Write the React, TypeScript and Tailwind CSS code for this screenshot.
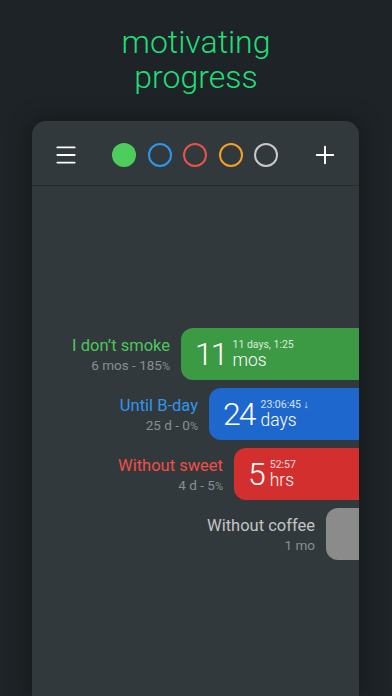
import { Menu, Plus } from "lucide-react";

const rows = [
  { label: "I don\u2019t smoke", sub: "6 mos - 185", pct: true, labelColor: "text-[#4cc85a]", pill: "bg-[#3d9a44]", width: "w-[178px]", big: "11", small: "11 days, 1:25", unit: "mos" },
  { label: "Until B-day", sub: "25 d - 0", pct: true, labelColor: "text-[#2f96ef]", pill: "bg-[#1e67cc]", width: "w-[150px]", big: "24", small: "23:06:45 \u2193", unit: "days" },
  { label: "Without sweet", sub: "4 d - 5", pct: true, labelColor: "text-[#ef4f4a]", pill: "bg-[#d42f2f]", width: "w-[125px]", big: "5", small: "52:57", unit: "hrs" },
  { label: "Without coffee", sub: "1 mo", pct: false, labelColor: "text-[#c4c4c4]", pill: "bg-[#8b8b8b]", width: "w-[33px]", big: "", small: "", unit: "" },
];

const rings = ["border-[#2f96ef]", "border-[#e5524f]", "border-[#f2a222]", "border-[#c9c9c9]"];

export default function App() {
  return (
    <div className="flex h-[696px] w-[392px] flex-col overflow-hidden bg-[#1d2326] font-['Roboto',sans-serif]">
      <h1 className="pt-[25px] text-center text-[32px] font-light leading-[35px] text-[#22dd78]">
        motivating
        <br />
        progress
      </h1>

      <div className="ml-[32px] mt-[26px] flex w-[327px] flex-1 flex-col overflow-hidden rounded-t-[14px] bg-[#32393c] shadow-[0_0_24px_rgba(0,0,0,0.35)]">
        <div className="flex h-[65px] items-center border-b border-[#252b2d] pl-[21px] pr-[20px] pt-[3px]">
          <Menu className="h-[26px] w-[26px] text-white" strokeWidth={1.7} />
          <div className="ml-[33px] flex items-center gap-[11.5px]">
            <span className="h-[24px] w-[24px] rounded-full bg-[#4dce5c]" />
            {rings.map((r) => (
              <span key={r} className={`h-[24px] w-[24px] rounded-full border-2 ${r}`} />
            ))}
          </div>
          <Plus className="ml-auto h-[28px] w-[28px] text-white" strokeWidth={1.7} />
        </div>

        <div className="flex flex-col gap-[8px] pt-[142px]">
          {rows.map((r) => (
            <div key={r.label} className="flex items-center justify-end gap-[11px]">
              <div className="pt-[2px] text-right">
                <p className={`text-[16.5px] leading-[20px] ${r.labelColor}`}>{r.label}</p>
                <p className="mt-[1px] text-[13.5px] leading-[17px] text-[#8a8e90]">
                  {r.sub}
                  {r.pct && <span className="text-[11px]">%</span>}
                </p>
              </div>
              <div className={`flex h-[52px] shrink-0 items-center rounded-l-[12px] pl-[14px] text-white ${r.pill} ${r.width}`}>
                {r.big && (
                  <>
                    <span className="text-[32px] font-light leading-none tracking-[-2px]">{r.big}</span>
                    <div className="ml-[6px] mt-[1px] flex flex-col">
                      <span className="text-[10.5px] leading-[12px] text-white/80">{r.small}</span>
                      <span className="text-[17.5px] font-light leading-[19px]">{r.unit}</span>
                    </div>
                  </>
                )}
              </div>
            </div>
          ))}
        </div>
      </div>
    </div>
  );
}
